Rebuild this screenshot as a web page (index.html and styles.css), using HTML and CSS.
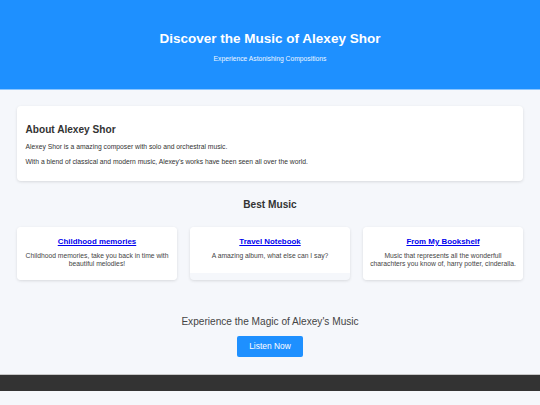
FILE: index.html
```html
<!DOCTYPE html>
<html lang="en">
<head>
  <meta charset="UTF-8">
  <meta name="viewport" content="width=device-width, initial-scale=1.0">
  <title>Alexey Shor</title>
  <link rel="stylesheet" href="styles.css">
</head>
<body>
  <header class="hero">
    <h1>Discover the Music of Alexey Shor</h1>
    <p>Experience Astonishing Compositions</p>
  </header>

  <main class="content">
    <section class="card about">
      <h2>About Alexey Shor</h2>
      <p>Alexey Shor is a amazing composer with solo and orchestral music.</p>
      <p>With a blend of classical and modern music, Alexey's works have been seen all over the world.</p>
    </section>

    <section class="music">
      <h2 class="section-title">Best Music</h2>
      <div class="albums">
        <div class="album">
          <div class="album-body">
            <h3><a href="#">Childhood memories</a></h3>
            <p>Childhood memories, take you back in time with beautiful melodies!</p>
          </div>
        </div>
        <div class="album">
          <div class="album-body">
            <h3><a href="#">Travel Notebook</a></h3>
            <p>A amazing album, what else can I say?</p>
          </div>
        </div>
        <div class="album">
          <div class="album-body">
            <h3><a href="#">From My Bookshelf</a></h3>
            <p>Music that represents all the wonderfull charachters you know of, harry potter, cinderalla.</p>
          </div>
        </div>
      </div>
    </section>

    <section class="cta">
      <h2>Experience the Magic of Alexey's Music</h2>
      <button class="btn">Listen Now</button>
    </section>
  </main>

  <footer class="footer"></footer>
</body>
</html>
```

FILE: styles.css
```css
body {
  margin: 0;
  font-family: "Liberation Sans", Arial, sans-serif;
  font-size: 6.75px;
  line-height: 7.8px;
  background-color: #f5f7fb;
  color: #333;
}

.hero {
  background-color: #1e90ff;
  color: white;
  text-align: center;
  padding: 31px 0 26px;
  border-bottom: 1px solid #8cc6ff;
}

.hero h1 {
  font-size: 13.5px;
  line-height: 15px;
  margin: 0 0 9px;
}

.hero p {
  margin: 0;
  line-height: 8px;
  color: #eef6ff;
}

.content {
  padding: 16px 17px 0;
}

.card {
  background-color: white;
  border-radius: 4px;
  box-shadow: 0 1px 3px rgba(0, 0, 0, 0.12);
  padding: 8.5px;
}

.about h2 {
  font-size: 10.125px;
  line-height: 11.6px;
  margin: 9px 0 8.4px;
}

.about p {
  margin: 6.75px 0;
}

.section-title {
  text-align: center;
  font-size: 10.125px;
  line-height: 11.6px;
  margin: 17.5px 0 16.5px;
}

.albums {
  display: grid;
  grid-template-columns: repeat(3, 1fr);
  gap: 13px;
}

.album {
  border-radius: 4px;
  box-shadow: 0 1px 3px rgba(0, 0, 0, 0.12);
  overflow: hidden;
}

.album-body {
  background-color: white;
  padding: 10px 6px 13px;
  text-align: center;
}

.album h3 {
  font-size: 7.9px;
  line-height: 9px;
  margin: 0 0 6.5px;
}

.album h3 a {
  color: #0000ee;
}

.album p {
  margin: 0;
  line-height: 7.5px;
  color: #444;
}

.cta {
  text-align: center;
  padding: 35.6px 0 16.5px;
}

.cta h2 {
  font-size: 10.125px;
  line-height: 11.6px;
  font-weight: normal;
  color: #444;
  margin: 0 0 8.4px;
}

.btn {
  font-family: inherit;
  font-size: 8.44px;
  line-height: 9.5px;
  padding: 6px 12.5px;
  background-color: #1e90ff;
  color: white;
  border: none;
  border-radius: 2px;
  cursor: pointer;
}

.footer {
  background-color: #333;
  border-top: 1px solid #c8c8c8;
  height: 16px;
}
```
